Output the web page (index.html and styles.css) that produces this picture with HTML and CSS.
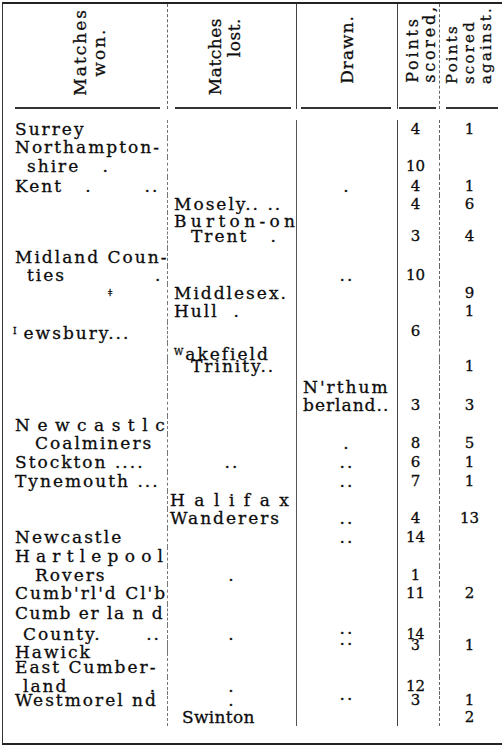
FILE: index.html
```html
<!DOCTYPE html>
<html lang="en">
<head>
<meta charset="utf-8">
<title>Matches table</title>
<link rel="stylesheet" href="styles.css">
</head>
<body>
<div class="sheet">
  <div class="head">
    <div class="hcell h-won"><div class="hbox"><div class="vt">Matches<br>won.</div></div><div class="hrule"></div></div>
    <div class="hcell h-lost"><div class="hbox"><div class="vt">Matches<br>lost.</div></div><div class="hrule"></div></div>
    <div class="hcell h-drawn"><div class="hbox"><div class="vt">Drawn.</div></div><div class="hrule"></div></div>
    <div class="hcell h-ps"><div class="hbox"><div class="vt">Points<br>scored,</div></div><div class="hrule"></div></div>
    <div class="hcell h-psa"><div class="hbox"><div class="vt">Points<br>scored<br>against.</div></div><div class="hrule"></div></div>
  </div>
  <div class="body">
    <div class="row h18"><div class="c1">Surrey</div><div class="c2"></div><div class="c3"></div><div class="c4">4</div><div class="c5">1</div></div>
    <div class="row h19"><div class="c1">Northampton-</div><div class="c2"></div><div class="c3"></div><div class="c4"></div><div class="c5"></div></div>
    <div class="row h20"><div class="c1 ib">shire   .</div><div class="c2"></div><div class="c3"></div><div class="c4">10</div><div class="c5"></div></div>
    <div class="row h18"><div class="c1">Kent   .       ..</div><div class="c2"></div><div class="c3 ctr">.</div><div class="c4">4</div><div class="c5">1</div></div>
    <div class="row h17"><div class="c1"></div><div class="c2">Mosely.. ..</div><div class="c3"></div><div class="c4">4</div><div class="c5">6</div></div>
    <div class="row h15"><div class="c1"></div><div class="c2 sp-bur">Burton-on</div><div class="c3"></div><div class="c4"></div><div class="c5"></div></div>
    <div class="row h21"><div class="c1"></div><div class="c2 t2">Trent   .</div><div class="c3"></div><div class="c4">3</div><div class="c5">4</div></div>
    <div class="row h18"><div class="c1">Midland Coun-</div><div class="c2"></div><div class="c3"></div><div class="c4"></div><div class="c5"></div></div>
    <div class="row h18"><div class="c1 ib">ties            .</div><div class="c2"></div><div class="c3 ctr">..</div><div class="c4">10</div><div class="c5"></div></div>
    <div class="row h18"><div class="c1 ix"><span class="mark">ǂ</span></div><div class="c2">Middlesex.</div><div class="c3"></div><div class="c4"></div><div class="c5">9</div></div>
    <div class="row h20"><div class="c1"></div><div class="c2">Hull  .</div><div class="c3"></div><div class="c4"></div><div class="c5">1</div></div>
    <div class="row h21"><div class="c1 im"><span class="mark lm">I</span>ewsbury...</div><div class="c2"></div><div class="c3"></div><div class="c4">6</div><div class="c5"></div></div>
    <div class="row h14"><div class="c1"></div><div class="c2"><span class="mark wm">W</span>akefield</div><div class="c3"></div><div class="c4"></div><div class="c5"></div></div>
    <div class="row h21"><div class="c1"></div><div class="c2 t2">Trinity..</div><div class="c3"></div><div class="c4"></div><div class="c5">1</div></div>
    <div class="row h18"><div class="c1"></div><div class="c2"></div><div class="c3">N'rthum</div><div class="c4"></div><div class="c5"></div></div>
    <div class="row h20"><div class="c1"></div><div class="c2"></div><div class="c3 tight">berland..</div><div class="c4">3</div><div class="c5">3</div></div>
    <div class="row h18"><div class="c1 sp-new">Newcastlc</div><div class="c2"></div><div class="c3"></div><div class="c4"></div><div class="c5"></div></div>
    <div class="row h19"><div class="c1 ic">Coalminers</div><div class="c2"></div><div class="c3 ctr">.</div><div class="c4">8</div><div class="c5">5</div></div>
    <div class="row h19"><div class="c1">Stockton ....</div><div class="c2 ctr">..</div><div class="c3 ctr">..</div><div class="c4">6</div><div class="c5">1</div></div>
    <div class="row h19"><div class="c1">Tynemouth ...</div><div class="c2"></div><div class="c3 ctr">..</div><div class="c4">7</div><div class="c5">1</div></div>
    <div class="row h18"><div class="c1"></div><div class="c2 p0 sp-hal">Halifax</div><div class="c3"></div><div class="c4"></div><div class="c5"></div></div>
    <div class="row h19"><div class="c1"></div><div class="c2 p0">Wanderers</div><div class="c3 ctr">..</div><div class="c4">4</div><div class="c5">13</div></div>
    <div class="row h19"><div class="c1">Newcastle</div><div class="c2"></div><div class="c3 ctr">..</div><div class="c4">14</div><div class="c5"></div></div>
    <div class="row h19"><div class="c1 sp-har">Hartlepool</div><div class="c2"></div><div class="c3"></div><div class="c4"></div><div class="c5"></div></div>
    <div class="row h18"><div class="c1 ic">Rovers</div><div class="c2 ctr">.</div><div class="c3"></div><div class="c4">1</div><div class="c5"></div></div>
    <div class="row h20"><div class="c1">Cumb'rl'd Cl'b</div><div class="c2"></div><div class="c3"></div><div class="c4">11</div><div class="c5">2</div></div>
    <div class="row h21"><div class="c1 sp-cum">Cumb er la n d</div><div class="c2"></div><div class="c3"></div><div class="c4"></div><div class="c5"></div></div>
    <div class="row h11"><div class="c1 ia">County.      ..</div><div class="c2 ctr">.</div><div class="c3 ctr dots">..</div><div class="c4 num-tight">14</div><div class="c5"></div></div>
    <div class="row h7"><div class="c1"></div><div class="c2"></div><div class="c3 ctr dots">..</div><div class="c4 num-tight">3</div><div class="c5">1</div></div>
    <div class="row h15"><div class="c1">Hawick</div><div class="c2"></div><div class="c3"></div><div class="c4"></div><div class="c5"></div></div>
    <div class="row h19"><div class="c1">East Cumber-</div><div class="c2"></div><div class="c3"></div><div class="c4"></div><div class="c5"></div></div>
    <div class="row h14"><div class="c1 ia">land           .</div><div class="c2 ctr">.</div><div class="c3"></div><div class="c4">12</div><div class="c5"></div></div>
    <div class="row h17"><div class="c1">Westmorel nd</div><div class="c2 ctr">.</div><div class="c3 ctr dots">..</div><div class="c4">3</div><div class="c5">1</div></div>
    <div class="row h18"><div class="c1"></div><div class="c2 sw">Swinton</div><div class="c3"></div><div class="c4"></div><div class="c5">2</div></div>
  </div>
</div>
</body>
</html>
```

FILE: styles.css
```css
html, body {
  margin: 0;
  padding: 0;
  background: #ffffff;
}

body {
  color: #0c0c0c;
  font-family: "DejaVu Serif", "Liberation Serif", serif;
  -webkit-text-stroke: 0.3px #0c0c0c;
  width: 502px;
  height: 745px;
  overflow: hidden;
}

.sheet {
  margin: 2px 0 0 2px;
  width: 500px;
  box-sizing: border-box;
  border-left: 1px solid #333;
  border-top: 2px solid #222;
  border-bottom: 2px solid #222;
}

/* ---------- header ---------- */
.head {
  display: grid;
  grid-template-columns: 164px 129px 101px 42px 63px;
  height: 105px;
}

.hcell {
  display: flex;
  flex-direction: column;
  min-width: 0;
}

.hcell + .hcell {
  border-left: 1px dashed #666;
}

.h-drawn,
.h-ps {
  border-left-style: solid !important;
  border-left-color: #444 !important;
}

.hbox {
  flex: 1;
  display: flex;
  align-items: flex-start;
}

.vt {
  writing-mode: vertical-rl;
  transform: rotate(180deg);
  white-space: nowrap;
  font-size: 17px;
  line-height: 19px;
  letter-spacing: 2px;
}

.hrule {
  height: 2px;
  background: #333;
}

.h-won .hbox { padding: 4px 0 0 68px; }
.h-won .vt { text-align: center; }
.h-won .hrule { margin: 0 7px 0 12px; }

.h-lost .hbox { padding: 14px 0 0 38px; }
.h-lost .vt { text-align: end; letter-spacing: 0.5px; }
.h-lost .hrule { margin: 0 5px 0 7px; }

.h-drawn .hbox { padding: 11px 0 0 41px; }
.h-drawn .vt { letter-spacing: 1px; }
.h-drawn .hrule { margin: 0 6px 0 4px; }

.h-ps .hbox { padding: 0 0 0 6px; }
.h-ps .vt { font-size: 16px; line-height: 17px; letter-spacing: 2.8px; text-align: start; }
.h-ps .hrule { margin: 0 3px 0 1px; }

.h-psa .hbox { padding: 2px 0 0 4px; }
.h-psa .vt { font-size: 15px; line-height: 17px; letter-spacing: 2.2px; text-align: start; }
.h-psa .hrule { margin: 0 4px 0 6px; }

/* ---------- body ---------- */
.body {
  padding: 11px 0 17px;
}

.row {
  display: grid;
  grid-template-columns: 164px 129px 101px 42px 63px;
  font-size: 17px;
  letter-spacing: 2px;
}

.row > div {
  white-space: pre;
  line-height: 18px;
  min-width: 0;
}

.h7 { height: 7px; }
.h11 { height: 11px; }
.h14 { height: 14px; }
.h15 { height: 15px; }
.h17 { height: 17px; }
.h18 { height: 18px; }
.h19 { height: 19px; }
.h20 { height: 20px; }
.h21 { height: 21px; }

.c1 { padding-left: 12px; }
.c2 { border-left: 1px dashed #777; padding-left: 6px; }
.c3 { border-left: 1px solid #555; padding-left: 6px; }
.c4 {
  border-left: 1px solid #444;
  text-align: center;
  padding-right: 6px;
  font-size: 15px;
  letter-spacing: 0;
}
.c5 {
  border-left: 1px dashed #666;
  text-align: center;
  padding-right: 3px;
  font-size: 15px;
  letter-spacing: 0;
}

.num-tight { font-size: 14px; }

.ctr { text-align: center; padding-left: 0 !important; }
.dots { line-height: 6px !important; }

.ia { padding-left: 20px; }
.ib { padding-left: 24px; }
.ic { padding-left: 32px; }
.im { padding-left: 10px; }
.ix { padding-left: 105px; }

.c2.t2 { padding-left: 23px; }
.c2.p0 { padding-left: 2px; }
.c2.sw { padding-left: 14px; letter-spacing: 0.3px; }

.sp-bur { letter-spacing: 4.3px; }
.sp-hal { letter-spacing: 9.5px; }
.sp-new { letter-spacing: 7.5px; }
.sp-har { letter-spacing: 6.2px; }
.sp-cum { letter-spacing: 1.5px; }
.tight { letter-spacing: 1px; }

.mark {
  font-size: 9px;
  letter-spacing: 0;
  vertical-align: 5px;
}
.lm { margin-right: 7px; }
.wm { margin-right: 2px; }
```
